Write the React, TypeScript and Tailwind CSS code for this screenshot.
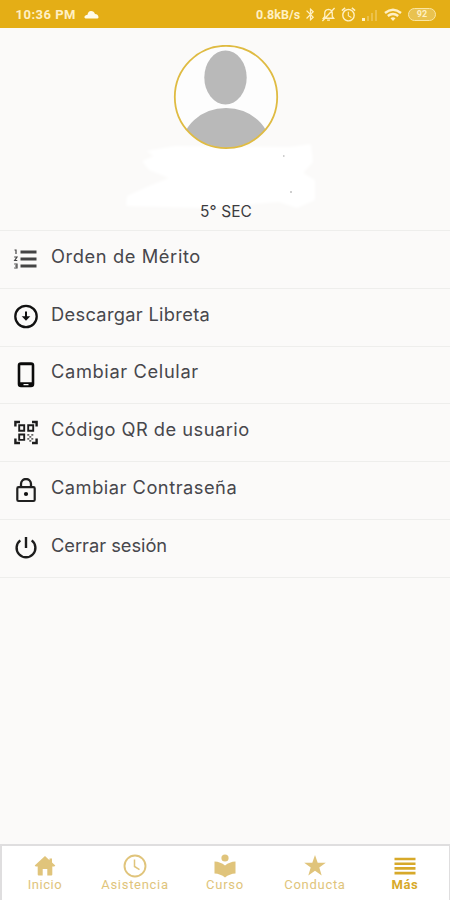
import React from 'react';
import { MdBluetooth, MdAlarm } from 'react-icons/md';

interface MenuEntry {
  label: string;
  spacing: string;
  icon: React.ReactNode;
}

interface TabEntry {
  label: string;
  spacing: string;
  icon: React.ReactNode;
  active?: boolean;
}

const MENU: MenuEntry[] = [
  {
    label: 'Orden de Mérito',
    spacing: 'tracking-[0.6px]',
    icon: (
      <svg viewBox="0 0 26 26" className="w-[26px] h-[26px]" fill="none" stroke="#444444">
        <path d="M7.5 6h16M7.5 13h16M7.5 20h16" strokeWidth="2.8" />
        <path d="M1.5 4h1.5v4M1.2 11h2.8l-2.3 3.5h2.6M1.2 18h2.8v4H1.2M2 20h2" strokeWidth="1.2" />
      </svg>
    ),
  },
  {
    label: 'Descargar Libreta',
    spacing: 'tracking-[0.3px]',
    icon: (
      <svg viewBox="0 0 26 26" className="w-[26px] h-[26px]" fill="none" stroke="#111111">
        <circle cx="13" cy="12.5" r="10.7" strokeWidth="2.3" />
        <path d="M13 7.5v6" strokeWidth="2" />
        <path d="M8.7 12.2h8.6L13 16.8z" fill="#111111" stroke="none" />
      </svg>
    ),
  },
  {
    label: 'Cambiar Celular',
    spacing: 'tracking-[0.63px]',
    icon: (
      <svg viewBox="0 0 26 26" className="w-[26px] h-[26px]">
        <path
          fillRule="evenodd"
          fill="#0b0b0b"
          d="M8 .3h10a3.300 3.300 0 0 1 3.300 3.300v18.400a3.300 3.300 0 0 1-3.300 3.300H8a3.300 3.300 0 0 1-3.300-3.300V3.600A3.300 3.300 0 0 1 8 .3zM7.300 3.300v17h11.400v-17zM10.500 22v1.200h5V22z"
        />
      </svg>
    ),
  },
  {
    label: 'Código QR de usuario',
    spacing: 'tracking-[0.47px]',
    icon: (
      <svg viewBox="0 0 26 26" className="w-[26px] h-[26px]" fill="none" stroke="#1c1c1c">
        <path d="M2.4 6.500V2H7M19 2h4.600v4.500M2.400 18.500V23H7M19 23h4.600v-4.500" strokeWidth="2.400" />
        <path d="M6.200 5.300h5v5.400h-5zM15.200 5.300h5v5.400h-5zM6.200 14.500h5v5.400h-5z" strokeWidth="1.900" />
        <path d="M14.300 14.800h2M18.300 14.800h2M16.300 16.800h2M14.300 18.800h2M18.300 18.800h2M16.300 20.800h2" strokeWidth="1.800" stroke="#666666" />
      </svg>
    ),
  },
  {
    label: 'Cambiar Contraseña',
    spacing: 'tracking-[0.5px]',
    icon: (
      <svg viewBox="0 0 26 26" className="w-[26px] h-[26px]" fill="none" stroke="#202020">
        <rect x="4.3" y="9.2" width="17.4" height="13.8" rx="1.3" strokeWidth="2.2" />
        <path d="M8 9V6a5 5 0 0 1 10 0v3" strokeWidth="2.3" />
        <circle cx="13" cy="16" r="2.1" fill="#111111" stroke="none" />
      </svg>
    ),
  },
  {
    label: 'Cerrar sesión',
    spacing: 'tracking-[-0.03px]',
    icon: (
      <svg viewBox="0 0 26 26" className="w-[26px] h-[26px]" fill="none" stroke="#1c1c1c" strokeWidth="2.4">
        <path d="M13 2v11M7.3 5.400a9.400 9.400 0 1 0 11.400 0" />
      </svg>
    ),
  },
];

const TABS: TabEntry[] = [
  {
    label: 'Inicio',
    spacing: 'tracking-[0.55px]',
    icon: (
      <svg viewBox="0 0 24 24" className="w-6 h-6" fill="currentColor">
        <path d="M12 2 1.7 11.500l1 .9h2V20.500q0 1 1 1h4v-6.500h4.600v6.500h4q1 0 1-1V12.400h2l1-.9-3.300-3V4.500h-2.500v1.700z" />
      </svg>
    ),
  },
  {
    label: 'Asistencia',
    spacing: 'tracking-[0.7px]',
    icon: (
      <svg viewBox="0 0 24 24" className="w-6 h-6" fill="none" stroke="currentColor" strokeWidth="1.9">
        <circle cx="12" cy="12" r="10.5" />
        <path d="M11.5 5.500v7l5 3.200" strokeWidth="1.5" />
      </svg>
    ),
  },
  {
    label: 'Curso',
    spacing: 'tracking-[0.75px]',
    icon: (
      <svg viewBox="0 0 24 24" className="w-6 h-6" fill="currentColor">
        <circle cx="12" cy="4" r="3.6" />
        <path d="M12 11.500C9 9 5.500 7.700 1.500 7.500v12C5.500 19.700 9 21 12 23.500c3-2.500 6.500-3.800 10.500-4v-12C18.500 7.700 15 9 12 11.500z" />
      </svg>
    ),
  },
  {
    label: 'Conducta',
    spacing: 'tracking-[0.7px]',
    icon: (
      <svg viewBox="0 0 24 24" className="w-6 h-6" fill="currentColor">
        <path d="m12 1 2.700 7.700h8.100l-6.500 4.900 2.400 7.900L12 16.700l-6.700 4.800 2.400-7.900-6.500-4.900h8.100z" />
      </svg>
    ),
  },
  {
    label: 'Más',
    spacing: 'tracking-[0.6px]',
    active: true,
    icon: (
      <svg viewBox="0 0 24 24" className="w-6 h-6" fill="none" stroke="currentColor" strokeWidth="2.6">
        <path d="M1.5 5h21M1.5 9.700h21M1.5 14.400h21M1.5 19.100h21" />
      </svg>
    ),
  },
];

const StatusBar: React.FC = () => (
  <div className="h-7 shrink-0 bg-[#e4ae16] flex items-center pl-[15.5px] pr-[14px] pt-px text-[#fff0c4] font-[Roboto]">
    <span className="w-[63px] pt-px text-[13px] font-bold tracking-[0.5px] whitespace-nowrap">10:36 PM</span>
    <svg viewBox="0 0 15 9" className="ml-[5.5px] w-[15px] h-[9px]" fill="#fffbe8">
      <path d="M1.5 8.500Q0 8 .5 6.500 1.500 4.800 3.500 4.800 4 1 7 1q3 0 4 3 3 .2 3.500 3 .2 1-1 1.500z" />
    </svg>
    <div className="ml-auto flex items-center">
      <span className="w-[47px] pt-px text-[12.5px] font-bold tracking-[0.1px] whitespace-nowrap">0.8kB/s</span>
      <MdBluetooth className="w-[15px] h-[15px]" stroke="currentColor" />
      <svg viewBox="0 0 16 16" className="ml-[3px] w-[15px] h-[15px]" fill="none" stroke="currentColor" strokeWidth="1.4">
        <path d="M2.5 12h11L12 10V6.500Q12 3 8 2.500 4 3 4 6.500V10zM6.500 14h3M14.500 1l-13 14" />
      </svg>
      <MdAlarm className="ml-[4px] w-[17px] h-[17px]" />
      <svg viewBox="0 0 18 14" className="ml-1 w-[18px] h-[14px]" fill="currentColor">
        <path d="M1 10h3v3H1z" />
        <path d="M6 8h2v5H6zM10 5h2v8h-2zM14 2h2v11h-2z" opacity=".3" />
      </svg>
      <svg viewBox="0 0 18 14" className="ml-[5px] w-[18px] h-[14px]" fill="none" stroke="currentColor" strokeWidth="2.4">
        <path d="M1 5q8-6.500 16 0M3.800 8q5.200-4 10.400 0" />
        <path d="M6.500 10.200q2.500-1.800 5 0L9 13z" fill="currentColor" stroke="none" />
      </svg>
      <div className="ml-[6px] w-7 h-[13px] rounded-full border-[1.5px] border-[#fbe6a3] bg-[#e9c24f] flex items-center justify-center text-[9px] font-bold leading-none">
        92
      </div>
    </div>
  </div>
);

const Profile: React.FC = () => (
  <div className="relative h-[203px] shrink-0 border-b border-[#eeeeec] flex flex-col items-center pt-[17px]">
    <svg viewBox="0 0 230 70" className="absolute left-[115px] top-[112px] w-[230px] h-[70px]" fill="#ffffff">
      <path
        className="blur-[1.5px]"
        d="M31 11 60 6l115 1 21-3 2 18-10 11 12 7v20l-18 8-18-6-77 6-76-2 1-10 22-10 20-8-20-8-7-9 12-5z"
      />
      <path d="M168 15h1.500v2H168zM175 51h2v2h-2z" fill="#cfcfcf" />
    </svg>
    <svg viewBox="0 0 106 106" className="relative left-[0.5px] w-[106px] h-[106px]">
      <defs>
        <clipPath id="avatar">
          <circle cx="53" cy="52" r="51" />
        </clipPath>
      </defs>
      <circle cx="53" cy="52" r="51" fill="#fdfdfd" />
      <g clipPath="url(#avatar)" fill="#b9b9b9">
        <ellipse cx="52.5" cy="32.5" rx="21.2" ry="27" />
        <ellipse cx="53" cy="104" rx="45" ry="41" />
      </g>
      <circle cx="53" cy="52" r="51.2" fill="none" stroke="#dfbb42" strokeWidth="1.8" />
    </svg>
    <span className="relative left-px mt-[49px] text-[15.5px] leading-6 tracking-[0.1px] text-[#3c3c3f]">
      5° SEC
    </span>
  </div>
);

const MenuRow: React.FC<{ entry: MenuEntry }> = ({ entry }) => (
  <div className="h-[57.8px] border-b border-[#eeeeec] flex items-center pl-[13px]">
    <span>{entry.icon}</span>
    <span className={`ml-3 -mt-[7px] text-[18.3px] leading-6 whitespace-nowrap text-[#47474c] ${entry.spacing}`}>
      {entry.label}
    </span>
  </div>
);

const TabBar: React.FC = () => (
  <nav className="h-14 shrink-0 bg-white shadow-[inset_2px_2px_0_#dfdedf,inset_-1px_0_0_#dfdedf] grid grid-cols-5 font-[Roboto]">
    {TABS.map((tab) => (
      <div
        key={tab.label}
        className={`flex flex-col items-center pt-[10px] ${tab.active ? 'text-[#d7a92a] font-bold' : 'text-[#e0c47b]'}`}
      >
        {tab.icon}
        <span className={`text-[13px] leading-[14px] ${tab.spacing}`}>{tab.label}</span>
      </div>
    ))}
  </nav>
);

export default function App() {
  return (
    <div className="w-[450px] h-[900px] overflow-hidden bg-[#fbfaf9] flex flex-col font-[Inter,sans-serif]">
      <StatusBar />
      <Profile />
      <div className="flex-1">
        {MENU.map((entry) => (
          <MenuRow key={entry.label} entry={entry} />
        ))}
      </div>
      <TabBar />
    </div>
  );
}
